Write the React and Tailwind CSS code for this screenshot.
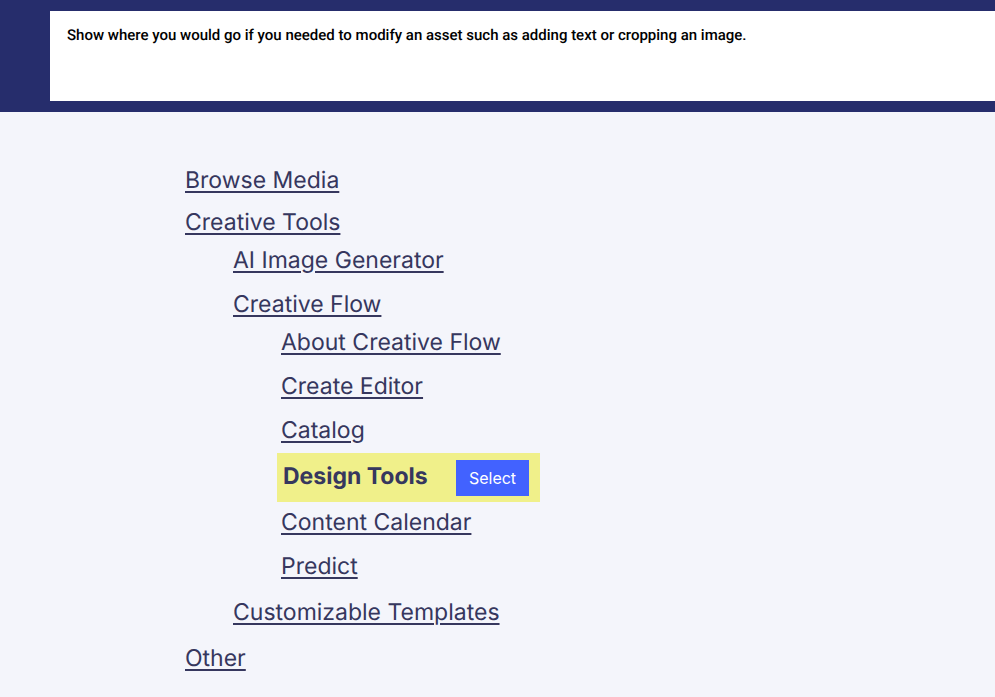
const linkClass = "underline decoration-2 underline-offset-3";

function Item({ label, className, children }) {
  return (
    <li>
      <div className={className}>
        <a href="#" className={linkClass}>{label}</a>
      </div>
      {children}
    </li>
  );
}

export default function App() {
  return (
    <div className="min-h-screen bg-[#f4f5fb] font-['Inter',sans-serif] text-[#36375e] [text-rendering:geometricPrecision]">
      <header className="bg-[#262d6c] py-[11px] pl-[50px]">
        <div className="h-[90px] bg-white px-[17px] pt-3">
          <h1 className="font-['Roboto',sans-serif] text-[15px] leading-6 font-medium text-black">
            Show where you would go if you needed to modify an asset such as adding text or cropping an image.
          </h1>
        </div>
      </header>
      <nav aria-label="Site tree" className="pt-[52px] pl-[185px] text-[23px] leading-8">
        <ul>
          <Item label="Browse Media" />
          <Item label="Creative Tools" className="pt-[10px]">
            <ul className="pl-12">
              <Item label="AI Image Generator" className="pt-[6px]" />
              <Item label="Creative Flow" className="pt-3">
                <ul className="pl-12">
                  <Item label="About Creative Flow" className="pt-[6px]" />
                  <Item label="Create Editor" className="pt-3" />
                  <Item label="Catalog" className="pt-3" />
                  <li className="mt-[7px] -ml-1 flex h-[49px] w-[263px] items-start justify-between bg-[#f0f08a] pt-[7px] pr-[11px] pl-[6px]">
                    <span className="font-bold">Design Tools</span>
                    <button className="h-9 w-[73px] bg-[#4262ff] text-base text-white">Select</button>
                  </li>
                  <Item label="Content Calendar" className="pt-1" />
                  <Item label="Predict" className="pt-3" />
                </ul>
              </Item>
              <Item label="Customizable Templates" className="pt-[14px]" />
            </ul>
          </Item>
          <Item label="Other" className="pt-[14px]" />
        </ul>
      </nav>
    </div>
  );
}
